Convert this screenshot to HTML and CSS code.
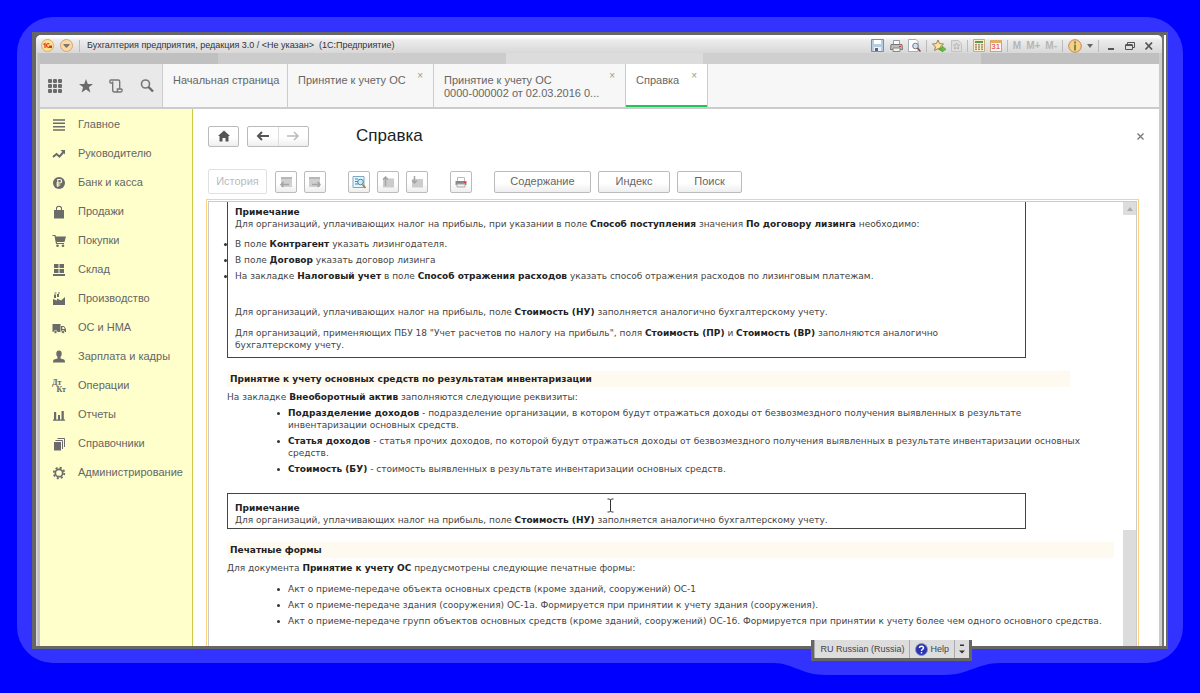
FILE: index.html
```html
<!DOCTYPE html>
<html lang="ru">
<head>
<meta charset="utf-8">
<title>Справка</title>
<link rel="stylesheet" href="styles.css">
</head>
<body>
<div class="halo">
<div class="frame">
<div class="window">
  <header class="titlebar">
    <svg class="orb" viewBox="0 0 13 13"><circle cx="6.500" cy="6.500" r="6" fill="#fbe58c" stroke="#d8a970"/><path d="M2.500 5.500l1.500-1v4.500M8.300 5.200C7.500 4.300 5.500 4.500 5.500 6.500S7.500 8.500 11 8.300M8 7.200h3" fill="none" stroke="#e0322a" stroke-width="1.200"/></svg>
    <svg class="orb" viewBox="0 0 13 13"><circle cx="6.500" cy="6.500" r="6" fill="#fbd9a0" stroke="#d8a080"/><path d="M3.500 5h6v1L6.500 9 3.500 6z" fill="#777"/></svg>
    <i class="sep"></i>
    <span class="caption">Бухгалтерия предприятия, редакция 3.0 / &lt;Не указан&gt;&nbsp; (1С:Предприятие)</span>
    <div class="tools">
      <button aria-label="Сохранить"><svg width="13" height="13" viewBox="0 0 13 13"><path d="M.5.500h12v12H.5z" fill="#b5cde0" stroke="#7890a5"/><path d="M3 1h7v4H3z" fill="#fff"/><path d="M3 8h7v4H3z" fill="#eef"/><path d="M4 9h3v3H4z" fill="#567"/></svg></button>
      <button class="print" aria-label="Печать"><svg width="13" height="12" viewBox="0 0 13 12"><path d="M3.500 4V.5h6V4" fill="#fff" stroke="#999"/><path d="M1 4.500h11l.5 5H.5z" fill="#bbb" stroke="#777"/><path d="M3 8h7v3.500H3z" fill="#f6efe6" stroke="#888"/><path d="M9 6h2v1H9z" fill="#d33"/></svg></button>
      <button aria-label="Просмотр"><svg width="13" height="13" viewBox="0 0 13 13"><path d="M.5.500H8l2 2v10H.5z" fill="#fff" stroke="#aab"/><circle cx="7.500" cy="7" r="2.800" fill="#cfe3ee" stroke="#778"/><path d="M9.500 9l3 3.500" stroke="#844" stroke-width="1.500"/></svg></button>
      <i class="sep"></i>
      <button aria-label="В избранное"><svg width="14" height="14" viewBox="0 0 14 14"><path d="M6 1l1.600 3.600 4 .4-3 2.600.8 4L6 9.600 2.600 11.600l.8-4-3-2.600 4-.4z" fill="#fbe3a0" stroke="#a08050"/><path d="M7 9h3V7l4 3.200L10 13v-2H7z" fill="#62c23c" stroke="#3a8a28" stroke-width=".5"/></svg></button>
      <button aria-label="Избранное" disabled><svg width="11" height="12" viewBox="0 0 11 12"><path d="M.5.500h7l3 3v8H.5z" fill="#ddd" stroke="#c3c3c3"/><path d="M5.500 3l1 2h2L7 6.500 7.500 9l-2-1.200-2 1.200L4 6.500 2.500 5h2z" fill="none" stroke="#b5b5b5"/></svg></button>
      <i class="sep"></i>
      <button aria-label="Калькулятор"><svg width="12" height="13" viewBox="0 0 12 13"><path d="M.5.500h11v12H.5z" fill="#f8efca" stroke="#c2b083"/><path d="M2 2h8v2H2z" fill="#5a9c4c"/><path d="M3 5v6M6 5v6M9 5v6" stroke="#8a6a58" stroke-width="1.500" stroke-dasharray="1.500 .7"/></svg></button>
      <button class="cal" aria-label="Календарь">31</button>
      <i class="sep"></i>
      <button class="mem" disabled>M</button><button class="mem" disabled>M+</button><button class="mem" disabled>M-</button>
      <i class="sep"></i>
      <button aria-label="Информация"><svg width="14" height="14" viewBox="0 0 14 14"><circle cx="7" cy="7" r="6.300" fill="#f9cf85" stroke="#bd8a58"/><path d="M6 2.500h2v2H6zM6 5.500h2v6H6z" fill="#7a8a40"/></svg></button>
      <button class="drop" aria-label="Ещё"><svg width="6" height="4" viewBox="0 0 6 4"><path d="M0 0h6L3 4z" fill="#666"/></svg></button>
      <i class="sep"></i>
      <button class="win" aria-label="Свернуть"><svg width="10" height="10" viewBox="0 0 10 10"><path d="M2 7h6v2H2z" fill="#555"/></svg></button>
      <button class="win" aria-label="Развернуть"><svg width="10" height="10" viewBox="0 0 10 10"><path d="M2.500 3V1.500h7v5H8M.5 4h7v4.500h-7z" fill="none" stroke="#555"/><path d="M.5 3h7v2h-7z" fill="#555"/></svg></button>
      <button class="win" aria-label="Закрыть"><svg width="10" height="10" viewBox="0 0 10 10"><path d="M1.500 1.500l6.500 7M8 1.500l-6.500 7" stroke="#555" stroke-width="1.800"/></svg></button>
    </div>
  </header>
  <div class="strip"><i></i><i></i><i></i><i></i><i></i></div>
  <div class="client">
  <nav class="tabs">
    <div class="quick">
      <button aria-label="Меню"><svg width="16" height="16" viewBox="0 0 16 16"><g fill="#6b6b6b"><rect x="1" y="1" width="4" height="4" rx="1"/><rect x="6" y="1" width="4" height="4" rx="1"/><rect x="11" y="1" width="4" height="4" rx="1"/><rect x="1" y="6" width="4" height="4" rx="1"/><rect x="6" y="6" width="4" height="4" rx="1"/><rect x="11" y="6" width="4" height="4" rx="1"/><rect x="1" y="11" width="4" height="4" rx="1"/><rect x="6" y="11" width="4" height="4" rx="1"/><rect x="11" y="11" width="4" height="4" rx="1"/></g></svg></button>
      <button aria-label="Избранное"><svg width="16" height="16" viewBox="0 0 16 16"><path d="M8 1l1.800 4.900 5.200.2-4.100 3.200 1.500 5.100L8 11.500l-4.400 2.900 1.500-5.100L1 6.100l5.200-.2z" fill="#6b6b6b"/></svg></button>
      <button aria-label="История"><svg width="16" height="16" viewBox="0 0 16 16"><path d="M4.500 5H2.800C1.500 5 1.500 2 2.800 2h7.400c1 0 1.500.7 1.500 1.500V11M4.700 3.500V12c0 1.200.6 2 1.600 2h6.500c1.700 0 1.700-3 .5-3H9.500v1.300c0 1-.6 1.700-1.500 1.700" fill="none" stroke="#777" stroke-width="1.400"/></svg></button>
      <button aria-label="Поиск"><svg width="16" height="16" viewBox="0 0 16 16"><circle cx="6.500" cy="6" r="4" fill="none" stroke="#777" stroke-width="1.600"/><path d="M9.500 9l4.500 4.500" stroke="#6b6b6b" stroke-width="2.400"/></svg></button>
    </div>
    <a class="tab t1" href="#">Начальная страница</a>
    <a class="tab t2" href="#">Принятие к учету ОС<span class="x">×</span></a>
    <a class="tab t3" href="#">Принятие к учету ОС<br>0000-000002 от 02.03.2016 0...<span class="x">×</span></a>
    <a class="tab t4 on" href="#">Справка<span class="x">×</span></a>
  </nav>
  <div class="body">
    <nav class="side">
      <a href="#"><svg viewBox="0 0 14 14"><path d="M1 2h12M1 5.300h12M1 8.700h12M1 12h12" stroke="#6b6b6b" stroke-width="1.500"/></svg>Главное</a>
      <a href="#"><svg viewBox="0 0 14 14"><path d="M1 10l3.500-3 3 2.500 4-4.500" fill="none" stroke="#6b6b6b" stroke-width="2"/><path d="M8.500 3H13v4.500z" fill="#6b6b6b"/></svg>Руководителю</a>
      <a href="#"><svg viewBox="0 0 14 14"><circle cx="7" cy="7" r="6" fill="#6b6b6b"/><path d="M5.800 11V3.500h2c2.400 0 2.400 3.500 0 3.500H4.300M4.300 9h4" fill="none" stroke="#ffc" stroke-width="1.200"/></svg>Банк и касса</a>
      <a href="#"><svg viewBox="0 0 14 14"><path d="M2 5h10v8.500H2z" fill="#6b6b6b"/><path d="M4.500 6.500V3.500C4.500.500 9.500.500 9.500 3.500v3" fill="none" stroke="#6b6b6b" stroke-width="1.100"/></svg>Продажи</a>
      <a href="#"><svg viewBox="0 0 14 14"><path d="M.5 1.500h2.500l1.500 8H12" fill="none" stroke="#6b6b6b" stroke-width="1.200"/><path d="M3 2.500h11l-1.500 5.500H4.200z" fill="#6b6b6b"/><circle cx="5.500" cy="11.800" r="1.300" fill="#6b6b6b"/><circle cx="11" cy="11.800" r="1.300" fill="#6b6b6b"/></svg>Покупки</a>
      <a href="#"><svg viewBox="0 0 14 14"><path d="M2 1h4.500v4H2zM7.500 1H12v4H7.500zM2 6h4.500v4H2zM7.500 6H12v4H7.500zM1 11h12v2H1z" fill="#6b6b6b"/></svg>Склад</a>
      <a href="#"><svg viewBox="0 0 14 14"><path d="M1 13V7l4 1.500V6.500l4 2L13 5v8zM2 2.500h2v3.500H2zM5 2h2v3H5zM2.500.5h2v1h-2zM6 .5h2v1H6z" fill="#6b6b6b"/></svg>Производство</a>
      <a href="#"><svg viewBox="0 0 14 14"><path d="M.5 3h8v8h-8zM9 5h3l2 3v3H9z" fill="#6b6b6b"/><path d="M10.300 6h1.500l1 2h-2.500z" fill="#ffc"/><circle cx="3.500" cy="11" r="1.600" fill="#6b6b6b" stroke="#ffc" stroke-width=".7"/><circle cx="11" cy="11" r="1.600" fill="#6b6b6b" stroke="#ffc" stroke-width=".7"/></svg>ОС и НМА</a>
      <a href="#"><svg viewBox="0 0 14 14"><ellipse cx="7" cy="3.800" rx="2.700" ry="3.200" fill="#6b6b6b"/><path d="M5.500 6h3v2.500l3.500 1c.7.300 1 1.500 1 3H1c0-1.500.3-2.700 1-3l3.500-1z" fill="#6b6b6b"/></svg>Зарплата и кадры</a>
      <a href="#"><span class="dk"><b>Дт</b><b>Кт</b></span>Операции</a>
      <a href="#"><svg viewBox="0 0 14 14"><path d="M2 4h2.200v8H2zM6 7h2v5H6zM9.500 3h2.300v9H9.500zM1 11.500h12v1.300H1z" fill="#6b6b6b"/></svg>Отчеты</a>
      <a href="#"><svg viewBox="0 0 14 14"><path d="M2 5h7v8.500H2z" fill="#6b6b6b"/><path d="M3.500 3.500h7V12M5.500 1.500h7V10" fill="none" stroke="#6b6b6b"/></svg>Справочники</a>
      <a href="#"><svg viewBox="0 0 14 14"><circle cx="7" cy="7" r="3.700" fill="none" stroke="#6b6b6b" stroke-width="1.700"/><circle cx="7" cy="7" r="5.300" fill="none" stroke="#6b6b6b" stroke-width="1.800" stroke-dasharray="2.080 2.080"/></svg>Администрирование</a>
    </nav>
    <main class="main">
      <div class="head">
        <button class="btn home" aria-label="Домой"><svg width="14" height="12" viewBox="0 0 14 12"><path d="M7 .5l6 5.500h-1.500v5.500H8.500V8h-3v3.500h-3V6H1z" fill="#555"/></svg></button>
        <div class="pair">
          <button aria-label="Назад"><svg width="14" height="12" viewBox="0 0 14 12"><path d="M2 6h11M6 2L2 6l4 4" fill="none" stroke="#555" stroke-width="2"/></svg></button>
          <button aria-label="Вперед"><svg width="14" height="12" viewBox="0 0 14 12"><path d="M1 6h11M8 2l4 4-4 4" fill="none" stroke="#bbb" stroke-width="1.500"/></svg></button>
        </div>
        <h1>Справка</h1>
        <button class="close" aria-label="Закрыть"><svg width="7" height="7" viewBox="0 0 7 7"><path d="M.5.500l6 6M6.500.500l-6 6" stroke="#777" stroke-width="1.300"/></svg></button>
      </div>
      <div class="bar">
        <button class="btn hist" disabled>История</button>
        <div class="grp">
          <button class="btn ic" aria-label="Предыдущая"><svg width="14" height="14" viewBox="0 0 14 14"><path d="M2 2h11v10H2z" fill="#d0d0d0"/><path d="M2 2h11v2H2z" fill="#b8b8b8"/><path d="M2 9.500h8M4.500 7L2 9.500 4.500 12" stroke="#a5a5a5" stroke-width="1.500" fill="none"/></svg></button>
          <button class="btn ic" aria-label="Следующая"><svg width="14" height="14" viewBox="0 0 14 14"><path d="M1 2h11v10H1z" fill="#d0d0d0"/><path d="M1 2h11v2H1z" fill="#b8b8b8"/><path d="M4 9.500h8M9.500 7l2.500 2.500L9.500 12" stroke="#a5a5a5" stroke-width="1.500" fill="none"/></svg></button>
        </div>
        <div class="grp">
          <button class="btn ic" aria-label="Найти в содержании"><svg width="14" height="14" viewBox="0 0 14 14"><path d="M1 1.500h11v11H1z" fill="#e8f4fa" stroke="#7fa9c2"/><path d="M3 4h3M3 6.500h3M3 9h3" stroke="#3c88b5"/><circle cx="8.500" cy="7" r="2.800" fill="#cdeaf5" stroke="#4a88a0"/><path d="M10.500 9.500l3 3.500" stroke="#b0803c" stroke-width="1.800"/></svg></button>
          <button class="btn ic" aria-label="Раздел выше"><svg width="14" height="14" viewBox="0 0 14 14"><path d="M2 3.500h11v9H2z" fill="#ccc"/><path d="M4.500 11V2M2 4.500L4.500 2 7 4.500" stroke="#a5a5a5" stroke-width="1.500" fill="none"/></svg></button>
          <button class="btn ic" aria-label="Раздел ниже"><svg width="14" height="14" viewBox="0 0 14 14"><path d="M2 4h11v8.500H2z" fill="#ccc"/><path d="M4.500 1v7M2 5.500L4.500 8 7 5.500" stroke="#a5a5a5" stroke-width="1.500" fill="none"/></svg></button>
        </div>
        <div class="grp"><button class="btn ic" aria-label="Печать"><svg width="14" height="12" viewBox="0 0 14 12"><path d="M3.500 5V1.500h7V5" fill="#fff" stroke="#bbb"/><path d="M1.500 5h11v4h-11z" fill="#888"/><path d="M3 8h8v3H3z" fill="#f4f0ea" stroke="#aaa"/><path d="M10 6h2v1h-2z" fill="#e33"/></svg></button></div>
        <div class="grp txt">
          <button class="btn w1">Содержание</button>
          <button class="btn w2">Индекс</button>
          <button class="btn w3">Поиск</button>
        </div>
      </div>
      <div class="viewer">
        <div class="pane">
          <article class="doc">
            <section class="note cut">
              <p><b>Примечание</b><br>Для организаций, уплачивающих налог на прибыль, при указании в поле <b>Способ поступления</b> значения <b>По договору лизинга</b> необходимо:</p>
              <ul>
                <li>В поле <b>Контрагент</b> указать лизингодателя.</li>
                <li>В поле <b>Договор</b> указать договор лизинга</li>
                <li>На закладке <b>Налоговый учет</b> в поле <b>Способ отражения расходов</b> указать способ отражения расходов по лизинговым платежам.</li>
              </ul>
              <p class="far">Для организаций, уплачивающих налог на прибыль, поле <b>Стоимость (НУ)</b> заполняется аналогично бухгалтерскому учету.</p>
              <p class="next">Для организаций, применяющих ПБУ 18 "Учет расчетов по налогу на прибыль", поля <b>Стоимость (ПР)</b> и <b>Стоимость (ВР)</b> заполняются аналогично бухгалтерскому учету.</p>
            </section>
            <h2 class="short">Принятие к учету основных средств по результатам инвентаризации</h2>
            <p>На закладке <b>Внеоборотный актив</b> заполняются следующие реквизиты:</p>
            <ul class="in">
              <li><b>Подразделение доходов</b> - подразделение организации, в котором будут отражаться доходы от безвозмездного получения выявленных в результате<br>инвентаризации основных средств.</li>
              <li><b>Статья доходов</b> - статья прочих доходов, по которой будут отражаться доходы от безвозмездного получения выявленных в результате инвентаризации основных средств.</li>
              <li><b>Стоимость (БУ)</b> - стоимость выявленных в результате инвентаризации основных средств.</li>
            </ul>
            <section class="note">
              <p><b>Примечание</b><br>Для организаций, уплачивающих налог на прибыль, поле <b>Стоимость (НУ)</b> заполняется аналогично бухгалтерскому учету.</p>
              <svg class="caret" width="7" height="15" viewBox="0 0 7 15"><path d="M.5 1h2l1 1 1-1h2M.5 14h2l1-1 1 1h2M3.500 2v11" fill="none" stroke="#333"/></svg>
            </section>
            <h2>Печатные формы</h2>
            <p>Для документа <b>Принятие к учету ОС</b> предусмотрены следующие печатные формы:</p>
            <ul class="in last">
              <li>Акт о приеме-передаче объекта основных средств (кроме зданий, сооружений) ОС-1</li>
              <li>Акт о приеме-передаче здания (сооружения) ОС-1а. Формируется при принятии к учету здания (сооружения).</li>
              <li>Акт о приеме-передаче групп объектов основных средств (кроме зданий, сооружений) ОС-1б. Формируется при принятии к учету более чем одного основного средства.</li>
            </ul>
          </article>
          <div class="scroll">
            <button aria-label="Вверх"><svg width="6" height="4" viewBox="0 0 6 4"><path d="M0 4h6L3 0z" fill="#aaa"/></svg></button>
            <i class="thumb"></i>
          </div>
        </div>
      </div>
    </main>
  </div>
  </div>
</div>
<div class="edge"></div>
<svg class="bump" width="226" height="26" viewBox="0 0 226 26"><path d="M0 0v14c18 0 28 12 52 12h118c24 0 34-12 56-12V0z" fill="#33f"/></svg>
<div class="lang">
  <button>RU Russian (Russia)</button>
  <button class="help"><svg width="13" height="13" viewBox="0 0 13 13"><circle cx="6.500" cy="6.500" r="6" fill="#2a35b5" stroke="#8890c8"/><path d="M4.500 5c0-2.500 4-2.300 4 0 0 1.300-2 1.300-2 3M6.500 9v1.500" fill="none" stroke="#fff" stroke-width="1.400"/></svg>Help</button>
  <button class="more" aria-label="Параметры"><svg width="6" height="10" viewBox="0 0 6 10"><path d="M1 .5h4v1.500H1zM0 6.500h6L3 9.500z" fill="#333"/></svg></button>
</div>
</div>
</div>
</body>
</html>
```
FILE: styles.css
```css
* { box-sizing: border-box; }
body {
  margin: 0;
  min-height: 100vh;
  padding: 17px 17px 30px;
  display: flex;
  background: #00f;
  font: 11px/13px "Liberation Sans", Arial, sans-serif;
  color: #666;
}
button { margin: 0; padding: 0; border: 0; background: none; font: inherit; color: inherit; display: flex; align-items: center; justify-content: center; }
a { color: inherit; text-decoration: none; }
svg { display: block; flex: none; }

.halo { flex: 1; min-width: 0; display: flex; padding: 15px 15px 14px; background: #33f; border-radius: 36px; }
.frame { position: relative; flex: 1; min-width: 0; display: flex; background: #666; padding: 3px 2px 3px 4px; }
.window {
  flex: 1;
  min-width: 0;
  display: flex;
  flex-direction: column;
  padding: 0 3px 0 4px;
  background: linear-gradient(90deg, #ddd, #bbb 3px, #ccc 4px, #ccc);
  border-radius: 5px 5px 0 0;
  overflow: hidden;
}
.edge { width: 4px; border-left: 2px solid #777; background: #fff; }

.titlebar {
  height: 18px;
  margin: 0 -3px 0 -4px;
  padding: 3px 6px 0 5px;
  display: flex;
  align-items: center;
  background: linear-gradient(#fff 0 2px, #ececec 5px, #d8d8d8);
}
.orb { width: 13px; height: 13px; margin-right: 6px; }
.sep { width: 1px; height: 12px; background: #bbb; }
.caption { flex: 1; margin-left: 7px; font-size: 9px; color: #333; white-space: nowrap; }
.tools { display: flex; align-items: center; gap: 5px; }
.print { margin: 0 0 0 1px; }
.cal { width: 12px; height: 12px; border: 1px solid #d0a080; border-top: 3px solid #e0b060; background: #fff6ee; color: #d33; font-size: 8px; line-height: 8px; }
.mem { font-size: 10px; font-weight: bold; color: #b5b5b5; }
.win { width: 14px; }
.strip { height: 11px; display: flex; background: #d0d0d0; }
.strip i { flex: 178; background: #c0c0c0; }
.strip i:nth-child(2) { flex: 288; background: #ccc; }
.strip i:nth-child(3) { flex: 198; background: #dcdcdc; }
.strip i:nth-child(4) { flex: 278; background: #cfcfcf; }

.client { flex: 1; display: flex; flex-direction: column; background: #fff; }
.tabs { height: 45px; display: flex; background: #f7f7f7; border-bottom: 2px solid #ccc; }
.quick { width: 123px; padding: 0 7px; display: flex; align-items: center; justify-content: space-between; background: #e9e9e9; border-right: 1px solid #ccc; }
.tab { position: relative; padding: 10px; border-right: 1px solid #ccc; white-space: nowrap; }
.t1 { width: 125px; }
.t2 { width: 146px; }
.t3 { width: 192px; }
.t4 { width: 82px; }
.on { background: #fff; box-shadow: inset 0 -2px #22c55a; }
.x { position: absolute; top: 5px; right: 10px; font-size: 10px; color: #999; }

.body { flex: 1; display: flex; }
.side { width: 153px; padding-top: 1px; background: #ffc; border-right: 1px solid #cc4; }
.side a { height: 29px; padding-left: 12px; display: flex; align-items: center; gap: 12px; white-space: nowrap; }
.side svg { width: 14px; height: 14px; }
.dk { width: 14px; display: flex; flex-direction: column; font: 8px/7px "Liberation Serif", serif; }
.dk b + b { align-self: flex-end; }

.main { flex: 1; min-width: 0; padding: 16px 20px 0 13px; display: flex; flex-direction: column; }
.head { height: 22px; padding-left: 2px; display: flex; align-items: center; gap: 8px; }
.btn, .pair { border: 1px solid #bbb; border-radius: 2px; background: linear-gradient(#fff 55%, #eee); }
.home { width: 31px; height: 21px; }
.pair { width: 62px; height: 21px; display: flex; }
.pair button { flex: 1; }
.pair button + button { border-left: 1px solid #ddd; }
h1 { flex: 1; margin: 0 0 0 39px; font-size: 17px; line-height: 22px; font-weight: normal; color: #222; }
.close { margin-right: -5px; width: 7px; }
.bar { margin-top: 22px; height: 25px; padding-left: 2px; display: flex; align-items: center; gap: 22px; }
.hist { width: 59px; height: 25px; margin-right: -14px; border-color: #e0e0e0; background: #fff; color: #bbb; }
.grp { display: flex; gap: 7px; }
.ic { width: 22px; height: 22px; }
.txt .btn { height: 22px; }
.w1 { width: 97px; }
.w2 { width: 72px; }
.w3 { width: 65px; }

.viewer { flex: 1; margin-top: 5px; padding: 1px 1px 0; border: 1px solid #ffd280; border-bottom: 0; display: flex; }
.pane { flex: 1; min-width: 0; border: 1px solid #ccc; border-bottom: 0; display: flex; }
.doc { flex: 1; min-width: 0; padding: 0 9px 0 18px; font: 9px/12px "DejaVu Sans", Verdana, sans-serif; color: #444; }
.doc p, .doc ul { margin: 0; padding: 0; }
.doc b, .doc h2 { color: #222; }
.note { position: relative; margin: 18px 88px 0 0; padding: 8px 7px 2px; border: 1px solid #444; }
.cut { margin-top: 0; padding: 4px 60px 6px 7px; border-top: 0; }
.doc h2 { margin: 13px 0 4px; padding: 2px 3px; font-size: 9px; line-height: 12px; background: #fffaf0; }
.doc h2.short { margin-right: 44px; }
.doc li { position: relative; list-style: none; margin-bottom: 4px; }
.doc li::before { content: ""; position: absolute; left: -11px; top: 5px; width: 3px; height: 3px; border-radius: 2px; background: #333; }
.cut ul { margin-top: 8px; }
.doc .far { padding-top: 20px; }
.doc .next { padding-top: 9px; }
.doc .in { margin-top: 4px; padding: 0 20px 0 61px; }
.doc .last { margin-top: 9px; padding-right: 0; }
.caret { position: absolute; left: 379px; top: 4px; }
.scroll { width: 13px; display: flex; flex-direction: column; justify-content: space-between; }
.scroll button { height: 13px; background: #ddd; }
.thumb { height: 116px; background: #dcdcdc; }

.bump { position: absolute; right: 168px; bottom: -26px; }
.lang { position: absolute; right: 196px; bottom: -12px; height: 21px; display: flex; border: solid #666; border-width: 0 3px 3px; background: #ddd; font-size: 9px; color: #444; }
.lang button { padding: 0 5px; border-left: 1px solid #aaa; white-space: nowrap; }
.lang .help { gap: 2px; }
.lang .more { padding: 0 4px; }
```
